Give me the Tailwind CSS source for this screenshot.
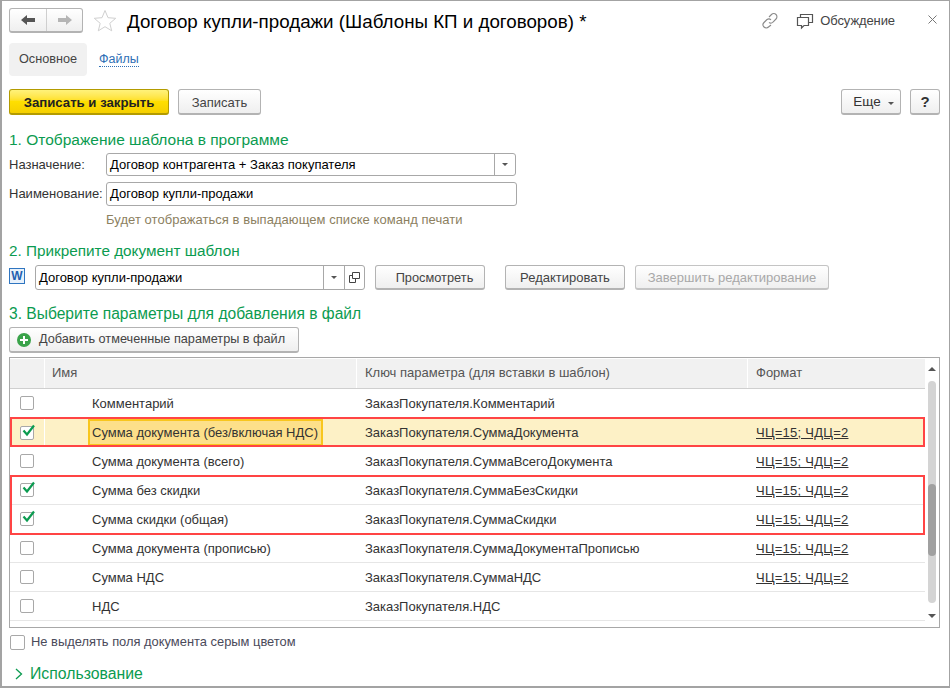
<!DOCTYPE html>
<html lang="ru">
<head>
  <meta charset="UTF-8" />
  <title>Договор купли-продажи</title>
  <script src="https://cdn.jsdelivr.net/npm/@tailwindcss/browser@4"></script>
</head>
<body class="bg-white">
  <div class="w-[950px] h-[688px] overflow-hidden border-2 border-[#a3a3a3] border-r-[1px] border-t-[1px] font-['Liberation_Sans',Arial,sans-serif] text-[13px] text-[#333]">
    <!-- шапка -->
    <div class="flex items-center h-[33px] pt-[6px] pl-[7px]">
      <div class="flex w-[74px] h-[25px] rounded-[3px] border border-[#b3b3b3] border-b-2 bg-gradient-to-b from-white to-[#efefef]">
        <div class="w-[37px] flex items-center justify-center border-r border-[#cfcfcf]">
          <svg width="16" height="12" viewBox="0 0 16 12"><path d="M1 6l6-5v3h8v4H7v3z" fill="#555"/></svg>
        </div>
        <div class="flex-1 flex items-center justify-center">
          <svg width="16" height="12" viewBox="0 0 16 12"><path d="M15 6L9 1v3H1v4h8v3z" fill="#b5b5b5"/></svg>
        </div>
      </div>
      <svg class="ml-[10px]" width="24" height="23" viewBox="0 0 24 23"><path d="M12 1.500l3 7.200 7.700.6-5.900 5 1.900 7.500-6.700-4.100-6.700 4.100 1.900-7.500-5.900-5 7.700-.6z" fill="#fff" stroke="#d0d0d0"/></svg>
      <div class="ml-[10px] mt-[2px] text-[18.750px] leading-[24px] text-black">Договор купли-продажи (Шаблоны КП и договоров) *</div>
      <svg class="ml-auto" width="18" height="18" viewBox="0 0 18 18" fill="none" stroke="#8a8a8a" stroke-width="1.100"><path d="M8 5l2.500-2.500a3 3 0 0 1 4.500 4.500L12 10a3 3 0 0 1-4 .5"/><path d="M10 8a3 3 0 0 0-4-.5L3 10.500a3 3 0 0 0 4.500 4.500L10 13"/></svg>
      <svg class="ml-[17px]" width="18" height="18" viewBox="0 0 18 18" fill="none" stroke="#555" stroke-width="1.200"><path d="M1.500 5.500h11v8H8l-2.500 2.500v-2.500h-4z"/><path d="M4.500 5.500v-3h12v8h-4"/></svg>
      <span class="ml-[6px] text-[#444] tracking-[-0.1px]">Обсуждение</span>
      <svg class="ml-[33px] mr-[12px] -mt-[3px]" width="9" height="9" viewBox="0 0 9 9" fill="none" stroke="#777" stroke-width="1"><path d="M.5.500l8 8M8.500.500l-8 8"/></svg>
    </div>

    <!-- вкладки -->
    <div class="flex items-center mt-[9px] pl-[7px] h-[33px]">
      <div class="w-[78px] h-[33px] flex items-center justify-center rounded-[4px] bg-[#f1f1f1] text-[#444] text-[12.700px]">Основное</div>
      <span class="ml-[12px] text-[#2f6fb5] text-[12.500px] border-b border-dotted border-[#2f6fb5] leading-[14px]">Файлы</span>
    </div>

    <!-- командная панель -->
    <div class="flex items-start mt-[13px] pl-[7px] pr-[9px]">
      <button class="w-[160px] h-[26px] pt-[2px] rounded-[3px] border border-[#b39b00] border-b-2 bg-gradient-to-b from-[#fff27a] via-[#ffdf00] to-[#f5cf00] font-bold text-[13.200px] text-[#222]">Записать и закрыть</button>
      <button class="ml-[9px] w-[83px] h-[26px] pt-[2px] rounded-[3px] border border-[#b3b3b3] border-b-2 bg-gradient-to-b from-white to-[#efefef] text-[#444]">Записать</button>
      <button class="ml-auto w-[60px] h-[26px] pt-[2px] pl-[5px] rounded-[3px] border border-[#b3b3b3] border-b-2 bg-gradient-to-b from-white to-[#efefef] flex items-center justify-center gap-[7px] text-[#333] text-[13.500px]">Еще <span class="w-0 h-0 border-x-[3px] border-x-transparent border-t-[3px] border-t-[#555] mt-[2px]"></span></button>
      <button class="ml-[9px] w-[30px] h-[26px] pt-[1px] rounded-[3px] border border-[#b3b3b3] border-b-2 bg-gradient-to-b from-white to-[#efefef] font-bold text-[15px] text-[#333]">?</button>
    </div>

    <!-- раздел 1 -->
    <div class="mt-[15px] pl-[7px] text-[15.500px] leading-[20px] text-[#0b9b50]">1. Отображение шаблона в программе</div>
    <div class="flex items-center mt-[3px] pl-[7px] h-[23px]">
      <span class="w-[97px]">Назначение:</span>
      <div class="flex w-[410px] h-[23px] rounded-[3px] border border-[#a8a8a8] items-center">
        <span class="flex-1 pl-[3px] text-black">Договор контрагента + Заказ покупателя</span>
        <span class="w-[21px] h-full border-l border-[#a8a8a8] flex items-center justify-center"><span class="w-0 h-0 border-x-[3px] border-x-transparent border-t-[3px] border-t-[#555]"></span></span>
      </div>
    </div>
    <div class="flex items-center mt-[6px] pl-[7px] h-[24px]">
      <span class="w-[97px]">Наименование:</span>
      <div class="flex w-[411px] h-[24px] rounded-[3px] border border-[#a8a8a8] items-center pl-[3px] text-black">Договор купли-продажи</div>
    </div>
    <div class="mt-[6px] pl-[104px] h-[16px] leading-[16px] text-[#8c7f5f] tracking-[0.05px]">Будет отображаться в выпадающем списке команд печати</div>

    <!-- раздел 2 -->
    <div class="mt-[13px] pl-[7px] text-[15.300px] leading-[20px] text-[#0b9b50]">2. Прикрепите документ шаблон</div>
    <div class="flex items-center mt-[4px] pl-[7px] h-[25px]">
      <div class="w-[16px] h-[16px] mb-[3px] border border-[#2f75c0] bg-[#e8f1fb] flex items-center justify-center text-[12px] leading-none font-bold text-[#1f5fb0]">W</div>
      <div class="ml-[10px] flex w-[330px] h-[25px] rounded-[3px] border border-[#a8a8a8] items-center">
        <span class="flex-1 pl-[3px] text-black">Договор купли-продажи</span>
        <span class="w-[21px] h-full border-l border-[#a8a8a8] flex items-center justify-center"><span class="w-0 h-0 border-x-[3px] border-x-transparent border-t-[3px] border-t-[#555]"></span></span>
        <span class="w-[20px] h-full border-l border-[#a8a8a8] flex items-center justify-center">
          <svg width="11" height="11" viewBox="0 0 11 11" fill="none" stroke="#444"><path d="M3.500 .5h7v6h-7z"/><path d="M3.500 3.500h-3v7h6v-4"/></svg>
        </span>
      </div>
      <button class="ml-[10px] w-[110px] h-[25px] pl-[9px] pt-[2px] rounded-[3px] border border-[#b3b3b3] border-b-2 bg-gradient-to-b from-white to-[#efefef] text-[#444] text-[12.800px]">Просмотреть</button>
      <button class="ml-[20px] w-[120px] h-[25px] pt-[2px] rounded-[3px] border border-[#b3b3b3] border-b-2 bg-gradient-to-b from-white to-[#efefef] text-[#444]">Редактировать</button>
      <button class="ml-[10px] w-[194px] h-[25px] pt-[2px] rounded-[3px] border border-[#c4c4c4] border-b-2 bg-gradient-to-b from-white to-[#efefef] text-[#a8a8a8]">Завершить редактирование</button>
    </div>

    <!-- раздел 3 -->
    <div class="mt-[14px] pl-[7px] text-[15.600px] leading-[20px] text-[#0b9b50]">3. Выберите параметры для добавления в файл</div>
    <div class="mt-[3px] pl-[7px]">
      <button class="w-[290px] h-[26px] rounded-[3px] border border-[#b3b3b3] border-b-2 bg-gradient-to-b from-white to-[#efefef] flex items-center pl-[7px] gap-[8px] text-[#444] text-[12.700px]">
        <svg width="14" height="14" viewBox="0 0 14 14"><circle cx="7" cy="7" r="7" fill="#3aa34a"/><path d="M7 3v8M3 7h8" stroke="#fff" stroke-width="2"/></svg>
        Добавить отмеченные параметры в файл
      </button>
    </div>

    <!-- таблица -->
    <div class="relative flex mt-[4px] ml-[7px] w-[931px] h-[271px] border border-[#a8a8a8] overflow-hidden">
      <div class="w-[915px] shrink-0">
        <div class="flex h-[30px] mt-[1px] border-b border-[#cfcfcf] text-[#555]">
          <div class="w-[35px] bg-[#f1f1f1] border-r border-white"></div>
          <div class="w-[312px] bg-[#f1f1f1] border-r border-white pl-[7px] leading-[28px]">Имя</div>
          <div class="w-[391px] bg-[#f1f1f1] border-r border-white pl-[8px] leading-[28px]">Ключ параметра (для вставки в шаблон)</div>
          <div class="flex-1 bg-[#f1f1f1] pl-[8px] leading-[28px]">Формат</div>
        </div>
        <div class="flex h-[29px] items-center border-b border-[#e6e6e6]">
          <div class="w-[35px] pl-[10px]"><div class="w-[14px] h-[14px] rounded-[2px] border border-[#a8a8a8]"></div></div>
          <div class="w-[312px] pl-[47px] pt-[2px]">Комментарий</div>
          <div class="w-[391px] pl-[8px] pt-[2px]">ЗаказПокупателя.Комментарий</div>
          <div class="flex-1"></div>
        </div>
        <div class="flex h-[29px] items-center bg-[#fdf1c6]">
          <div class="w-[35px] h-full pl-[10px] flex items-center border-r border-white">
            <div class="relative w-[14px] h-[14px] rounded-[2px] border border-[#a8a8a8] bg-white"><svg class="absolute -top-[3px] left-0" width="15" height="14" viewBox="0 0 15 14"><path d="M2.500 6.500l3.500 4 7-9" fill="none" stroke="#0b9b50" stroke-width="2.200"/></svg></div>
          </div>
          <div class="w-[312px] pl-[43px] h-full flex items-center">
            <span class="h-[27px] pl-[2px] pr-[3px] leading-[23px] bg-[#fde08a] border-2 border-[#f8c61d]">Сумма документа (без/включая НДС)</span>
          </div>
          <div class="w-[391px] pl-[8px]">ЗаказПокупателя.СуммаДокумента</div>
          <div class="flex-1 pl-[8px] underline tracking-[0.25px]">ЧЦ=15; ЧДЦ=2</div>
        </div>
        <div class="flex h-[29px] items-center border-b border-[#e6e6e6]">
          <div class="w-[35px] pl-[10px]"><div class="w-[14px] h-[14px] rounded-[2px] border border-[#a8a8a8]"></div></div>
          <div class="w-[312px] pl-[47px] pt-[2px]">Сумма документа (всего)</div>
          <div class="w-[391px] pl-[8px] pt-[2px]">ЗаказПокупателя.СуммаВсегоДокумента</div>
          <div class="flex-1 pl-[8px] pt-[2px] underline tracking-[0.25px]">ЧЦ=15; ЧДЦ=2</div>
        </div>
        <div class="flex h-[29px] items-center border-b border-[#e6e6e6]">
          <div class="w-[35px] pl-[10px]">
            <div class="relative w-[14px] h-[14px] rounded-[2px] border border-[#a8a8a8]"><svg class="absolute -top-[3px] left-0" width="15" height="14" viewBox="0 0 15 14"><path d="M2.500 6.500l3.500 4 7-9" fill="none" stroke="#0b9b50" stroke-width="2.200"/></svg></div>
          </div>
          <div class="w-[312px] pl-[47px] pt-[2px]">Сумма без скидки</div>
          <div class="w-[391px] pl-[8px] pt-[2px]">ЗаказПокупателя.СуммаБезСкидки</div>
          <div class="flex-1 pl-[8px] pt-[2px] underline tracking-[0.25px]">ЧЦ=15; ЧДЦ=2</div>
        </div>
        <div class="flex h-[29px] items-center border-b border-[#e6e6e6]">
          <div class="w-[35px] pl-[10px]">
            <div class="relative w-[14px] h-[14px] rounded-[2px] border border-[#a8a8a8]"><svg class="absolute -top-[3px] left-0" width="15" height="14" viewBox="0 0 15 14"><path d="M2.500 6.500l3.500 4 7-9" fill="none" stroke="#0b9b50" stroke-width="2.200"/></svg></div>
          </div>
          <div class="w-[312px] pl-[47px] pt-[2px]">Сумма скидки (общая)</div>
          <div class="w-[391px] pl-[8px] pt-[2px]">ЗаказПокупателя.СуммаСкидки</div>
          <div class="flex-1 pl-[8px] pt-[2px] underline tracking-[0.25px]">ЧЦ=15; ЧДЦ=2</div>
        </div>
        <div class="flex h-[29px] items-center border-b border-[#e6e6e6]">
          <div class="w-[35px] pl-[10px]"><div class="w-[14px] h-[14px] rounded-[2px] border border-[#a8a8a8]"></div></div>
          <div class="w-[312px] pl-[47px] pt-[2px]">Сумма документа (прописью)</div>
          <div class="w-[391px] pl-[8px] pt-[2px]">ЗаказПокупателя.СуммаДокументаПрописью</div>
          <div class="flex-1 pl-[8px] pt-[2px] underline tracking-[0.25px]">ЧЦ=15; ЧДЦ=2</div>
        </div>
        <div class="flex h-[29px] items-center border-b border-[#e6e6e6]">
          <div class="w-[35px] pl-[10px]"><div class="w-[14px] h-[14px] rounded-[2px] border border-[#a8a8a8]"></div></div>
          <div class="w-[312px] pl-[47px] pt-[2px]">Сумма НДС</div>
          <div class="w-[391px] pl-[8px] pt-[2px]">ЗаказПокупателя.СуммаНДС</div>
          <div class="flex-1 pl-[8px] pt-[2px] underline tracking-[0.25px]">ЧЦ=15; ЧДЦ=2</div>
        </div>
        <div class="flex h-[29px] items-center border-b border-[#e6e6e6]">
          <div class="w-[35px] pl-[10px]"><div class="w-[14px] h-[14px] rounded-[2px] border border-[#a8a8a8]"></div></div>
          <div class="w-[312px] pl-[47px] pt-[2px]">НДС</div>
          <div class="w-[391px] pl-[8px] pt-[2px]">ЗаказПокупателя.НДС</div>
          <div class="flex-1"></div>
        </div>
      </div>
      <!-- полоса прокрутки -->
      <div class="flex-1 flex flex-col items-center pt-[9px]">
        <span class="w-0 h-0 border-x-[4px] border-x-transparent border-b-[4px] border-b-[#555]"></span>
        <div class="relative mt-[10px] w-[8px] h-[222px] rounded-[4px] bg-[#d4d4d4]">
          <div class="absolute top-[103px] left-0 w-[8px] h-[72px] rounded-[4px] bg-[#a0a0a0]"></div>
        </div>
        <span class="mt-[11px] w-0 h-0 border-x-[4px] border-x-transparent border-t-[4px] border-t-[#555]"></span>
      </div>
      <!-- красные рамки поверх строк -->
      <div class="absolute left-0 top-[59px] w-[915px] h-[30px] border-2 border-[#ff4444]"></div>
      <div class="absolute left-0 top-[117px] w-[915px] h-[60px] border-2 border-[#ff4444]"></div>
    </div>

    <div class="flex items-center mt-[6px] pl-[8px] h-[16px]">
      <div class="w-[15px] h-[15px] rounded-[2px] border border-[#a8a8a8]"></div>
      <span class="ml-[6px] text-[12.900px] text-[#4a4a5a]">Не выделять поля документа серым цветом</span>
    </div>
    <div class="flex items-center mt-[14px] pl-[13px] h-[20px] text-[15.800px] text-[#0b9b50]">
      <svg width="8" height="12" viewBox="0 0 8 12" fill="none" stroke="#0b9b50" stroke-width="1.300"><path d="M1 1l5.500 5L1 11"/></svg>
      <span class="ml-[7px]">Использование</span>
    </div>
  </div>
</body>
</html>
